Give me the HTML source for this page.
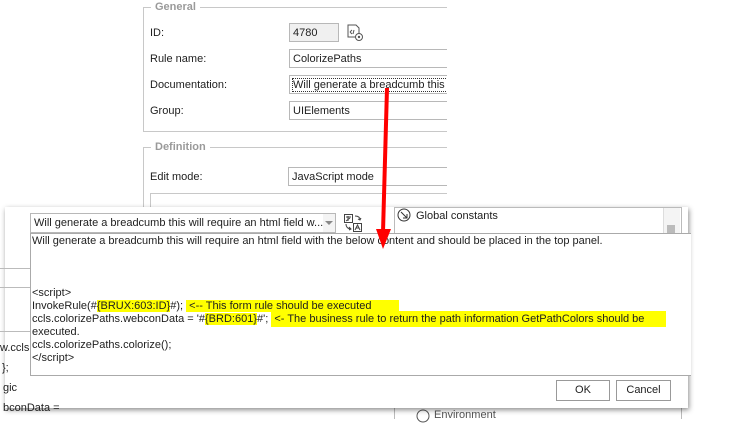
<!DOCTYPE html>
<html><head><style>
body{margin:0;width:741px;height:419px;position:relative;overflow:hidden;background:#fff;font-family:"Liberation Sans",sans-serif;font-size:11px;color:#1e1e1e}
.a{position:absolute}
.lbl{position:absolute;left:150px;font-size:11px}
.box{position:absolute;border:1px solid #b8b8b8;background:#fff;height:19px;line-height:19px;padding-left:3px;box-sizing:border-box}
.grp{position:absolute;border:1px solid #c8c8c8}
.gt{position:absolute;background:#fff;color:#9a9a9a;font-weight:bold;font-size:11px;padding:0 4px}
.hl{background:#ffff00}
.t{position:absolute;left:32px;white-space:nowrap;font-size:11px}
#form{position:absolute;left:0;top:0;width:447px;height:419px;overflow:hidden}
</style></head><body>
<div id="form">
<div class="grp" style="left:143px;top:7px;width:340px;height:123px"></div>
<div class="gt" style="left:151px;top:1px">General</div>
<div class="lbl" style="top:27px">ID:</div>
<div class="box" style="left:289px;top:23px;width:50px;background:#f0f0f0">4780</div>
<svg class="a" style="left:346px;top:24px" width="18" height="18" viewBox="0 0 18 18"><path d="M2 1h8l3 3v9H2z" fill="#fff" stroke="#555"/><circle cx="13" cy="13" r="3.5" fill="#fff" stroke="#555"/><circle cx="13" cy="13" r="1.2" fill="#555"/><path d="M4 8l2-2M4 8l2 2M8 6l-1 4" stroke="#555"/></svg>
<div class="lbl" style="top:53px">Rule name:</div>
<div class="box" style="left:289px;top:49px;width:200px">ColorizePaths</div>
<div class="lbl" style="top:79px">Documentation:</div>
<div class="box" style="left:289px;top:75px;width:200px;white-space:nowrap;overflow:hidden"><span style="outline:1px dotted #333">Will generate a breadcumb this will</span></div>
<div class="lbl" style="top:105px">Group:</div>
<div class="box" style="left:289px;top:101px;width:200px">UIElements</div>
<div class="grp" style="left:143px;top:147px;width:340px;height:80px"></div>
<div class="gt" style="left:151px;top:141px">Definition</div>
<div class="lbl" style="top:171px">Edit mode:</div>
<div class="box" style="left:288px;top:167px;width:200px">JavaScript mode</div>
<div class="a" style="left:150px;top:193px;width:330px;height:20px;border:1px solid #c8c8c8"></div>
</div>
<svg class="a" style="left:416px;top:409px" width="14" height="14"><circle cx="7" cy="7" r="6" fill="none" stroke="#555"/></svg>
<div class="a" style="left:434px;top:409px;color:#555">Environment</div>
<div class="a" style="left:394px;top:233px;width:286px;height:186px;border-left:1px solid #bbb;border-right:1px solid #bbb"></div>
<!-- dialog -->
<div class="a" style="left:5px;top:207px;width:683px;height:201px;background:#fff;box-shadow:1px 2px 5px rgba(0,0,0,.45)"></div>
<div class="a" style="left:0;top:268px;width:30px;border-top:1px solid #bbb"></div>
<div class="a" style="left:0;top:287px;width:30px;border-top:1px solid #bbb"></div>
<div class="a" style="left:0;top:331px;width:30px;border-top:1px solid #bbb"></div>
<div class="a" style="left:0;top:342px">w.ccls</div>
<div class="a" style="left:2px;top:362px">};</div>
<div class="a" style="left:3px;top:382px">gic</div>
<div class="a" style="left:3px;top:402px">bconData =</div>
<div class="box" style="left:30px;top:213px;width:306px;height:20px;white-space:nowrap">Will generate a breadcumb this will require an html field w...</div>
<div class="a" style="left:323px;top:214px;width:12px;height:18px;background:#f4f4f4"></div>
<div class="a" style="left:325px;top:221px;border-left:4px solid transparent;border-right:4px solid transparent;border-top:4px solid #888"></div>
<svg class="a" style="left:343px;top:213px" width="20" height="20" viewBox="0 0 20 20" fill="none" stroke="#444"><rect x="1.5" y="1.5" width="8" height="8"/><path d="M3 4h5M5 3v5M3 8l4-3"/><rect x="10.5" y="10.5" width="8" height="8"/><path d="M12 17l2.5-5 2.5 5M13 15h3M12 3c3 0 5 1 5 4M15 6l2 1 1-2M3 11c0 3 2 5 5 5M6 14l2 2-2 1"/></svg>
<div class="a" style="left:394px;top:207px;width:286px;height:26px;border:1px solid #bbb;border-bottom:none"></div>
<svg class="a" style="left:397px;top:208px" width="14" height="14"><circle cx="7" cy="7" r="6" fill="none" stroke="#333"/><path d="M4 4l6 6M10 6v4H6" fill="none" stroke="#333"/></svg>
<div class="a" style="left:416px;top:210px">Global constants</div>
<div class="a" style="left:663px;top:208px;width:16px;height:25px;border-left:1px solid #ddd;background:#f4f4f4"></div>
<div class="a" style="left:667px;top:225px;width:8px;height:8px;background:#bbb"></div>
<div class="a" style="left:30px;top:233px;width:660px;height:141px;border-top:1px solid #aaa;border-bottom:1px solid #aaa;border-left:1px solid #aaa;background:#fff"></div>
<div class="t" style="top:235px">Will generate a breadcumb this will require an html field with the below content and should be placed in the top panel.</div>
<div class="t" style="top:287px">&lt;script&gt;</div>
<div class="t" style="top:300px">InvokeRule(#<span class="hl">{BRUX:603:ID}</span>#); <span class="hl">&nbsp;&lt;-- This form rule should be executed &nbsp;&nbsp;&nbsp;&nbsp;&nbsp;&nbsp;&nbsp;&nbsp;</span></div>
<div class="t" style="top:313px;line-height:13px">ccls.colorizePaths.webconData = '#<span class="hl">{BRD:601}</span>#'; <span class="hl" style="padding:2px 0 2px 0">&nbsp;&lt;- The business rule to return the path information GetPathColors should be &nbsp;&nbsp;&nbsp;&nbsp;&nbsp;&nbsp;</span></div>
<div class="t" style="top:326px">executed.</div>
<div class="t" style="top:339px">ccls.colorizePaths.colorize();</div>
<div class="t" style="top:352px">&lt;/script&gt;</div>
<div class="a" style="left:556px;top:380px;width:54px;height:21px;border:1px solid #999;box-sizing:border-box;text-align:center;line-height:19px">OK</div>
<div class="a" style="left:616px;top:380px;width:55px;height:21px;border:1px solid #999;box-sizing:border-box;text-align:center;line-height:19px">Cancel</div>
<svg class="a" style="left:0;top:0" width="741" height="419"><line x1="387" y1="88" x2="383" y2="232" stroke="#f00" stroke-width="4"/><polygon points="376,229 391,229 383,249" fill="#f00"/></svg>
</body></html>
